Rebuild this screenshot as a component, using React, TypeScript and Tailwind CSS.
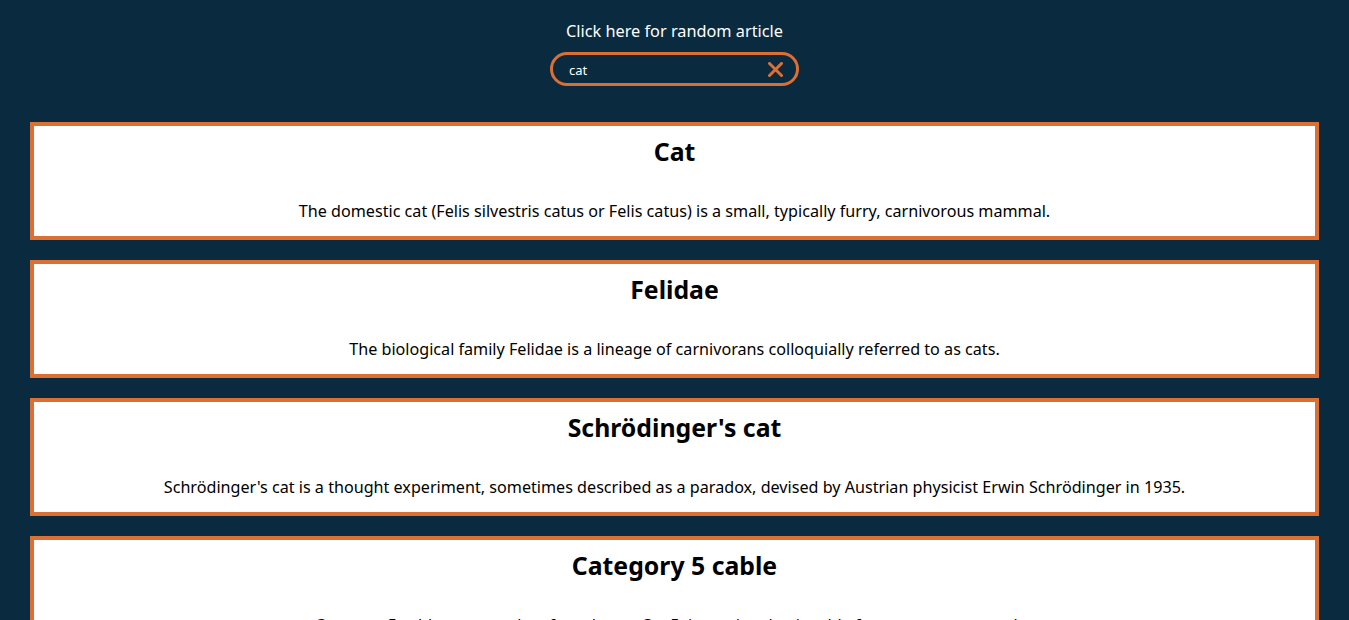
import { useState } from 'react'

type Article = {
  title: string
  extract: string
}

const articles: Article[] = [
  {
    title: 'Cat',
    extract:
      'The domestic cat (Felis silvestris catus or Felis catus) is a small, typically furry, carnivorous mammal.',
  },
  {
    title: 'Felidae',
    extract:
      'The biological family Felidae is a lineage of carnivorans colloquially referred to as cats.',
  },
  {
    title: "Schrödinger's cat",
    extract:
      "Schrödinger's cat is a thought experiment, sometimes described as a paradox, devised by Austrian physicist Erwin Schrödinger in 1935.",
  },
  {
    title: 'Category 5 cable',
    extract:
      'Category 5 cable, commonly referred to as Cat 5, is a twisted pair cable for computer networks.',
  },
]

export default function App() {
  const [query, setQuery] = useState('cat')

  return (
    <div className="min-h-screen bg-[#0a2a3f] font-['Noto_Sans',sans-serif] text-black">
      {/* ヘッダー */}
      <div className="flex flex-col items-center pt-[20px]">
        <a href="#" className="text-[16.3px] leading-[22px] text-white">
          Click here for random article
        </a>
        <div className="mt-[10px] flex h-[34px] w-[249px] items-center rounded-full border-[3px] border-[#dc6f33] pl-[16px] pr-[13px]">
          <input
            value={query}
            onChange={(e) => setQuery(e.target.value)}
            className="min-w-0 flex-1 bg-transparent pt-[3px] text-[13px] text-white outline-none"
          />
          <button onClick={() => setQuery('')} className="flex items-center pt-[1px]">
            <svg width="15" height="15" viewBox="0 0 15 15">
              <path
                d="M1.5 1.5 L13.5 13.5 M13.5 1.5 L1.5 13.5"
                stroke="#dc6f33"
                strokeWidth="3"
                strokeLinecap="square"
              />
            </svg>
          </button>
        </div>
      </div>

      {/* 検索結果 */}
      <div className="mt-[36px] flex flex-col gap-[20px] px-[30px] pb-[30px]">
        {articles.map((a) => (
          <div
            key={a.title}
            className="border-4 border-[#dc6f33] bg-white px-4 pt-[9px] pb-[14px] text-center"
          >
            <h2 className="text-[24.8px] leading-[33px] font-bold">{a.title}</h2>
            <p className="mt-[32px] text-[16.15px] leading-[22px]">{a.extract}</p>
          </div>
        ))}
      </div>
    </div>
  )
}
